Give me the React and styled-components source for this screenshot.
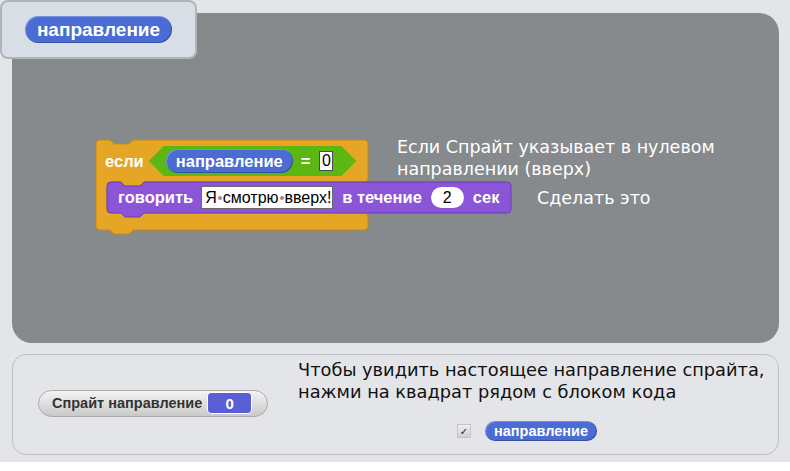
import React from "react";
import styled, { createGlobalStyle } from "styled-components";

const Global = createGlobalStyle`
  html, body { margin: 0; padding: 0; background: #ffffff; }
  #root { width: 790px; height: 471px; }
`;

const ORANGE = "#e6a625";
const ORANGE_DARK = "#c88a12";
const PURPLE = "#8a55d7";
const PURPLE_DARK = "#6b3cb8";
const BLUE = "#4a6cd4";
const GREEN = "#5cb712";

const Page = styled.div`
  position: relative;
  width: 790px;
  height: 462px;
  box-sizing: border-box;
  background: #e4e5e9;
  padding: 13px 11px 7px 12px;
  display: flex;
  flex-direction: column;
  gap: 11px;
`;

const Canvas = styled.div`
  position: relative;
  height: 330px;
  background: #868a8c;
  border-radius: 20px;
`;

const LabelBox = styled.div`
  position: absolute;
  left: 0;
  top: 0;
  width: 197px;
  height: 59px;
  box-sizing: border-box;
  background: #d8dee6;
  border: 2px solid #b1b5ba;
  border-radius: 8px;
  display: flex;
  align-items: flex-start;
  padding: 14px 0 0 23px;
`;

const Reporter = styled.div`
  display: inline-flex;
  align-items: center;
  justify-content: center;
  box-sizing: border-box;
  height: ${(p) => p.$h}px;
  width: ${(p) => p.$w}px;
  flex-shrink: 0;
  background: ${BLUE};
  border-radius: ${(p) => p.$h / 2}px;
  box-shadow: inset -1px -1px 0 rgba(0, 0, 0, 0.25), inset 1px 1px 0 rgba(255, 255, 255, 0.25);
  color: #fff;
  font-family: "Liberation Sans", Arial, sans-serif;
  font-weight: 700;
  font-size: ${(p) => p.$fs}px;
  white-space: nowrap;
`;

const Script = styled.div`
  position: absolute;
  left: 84px;
  top: 127px;
  display: flex;
  flex-direction: column;
`;

const CBlock = styled.div`
  position: relative;
  width: 272px;
  height: 95px;
  display: flex;
  flex-direction: column;
`;

const Shape = styled.svg`
  position: absolute;
  left: 0;
  top: 0;
  overflow: visible;
`;

const Header = styled.div`
  position: relative;
  height: 42px;
  display: flex;
  align-items: center;
  padding-left: 9px;
  gap: 5px;
`;

const BlockText = styled.span`
  color: #fff;
  font-family: "Liberation Sans", Arial, sans-serif;
  font-weight: 700;
  font-size: 16.5px;
  white-space: nowrap;
`;

const Hexagon = styled.div`
  display: flex;
  align-items: center;
  height: 30px;
  padding: 0 23px 0 17px;
  background: ${GREEN};
  clip-path: polygon(15px 0, calc(100% - 15px) 0, 100% 50%, calc(100% - 15px) 100%, 15px 100%, 0 50%);
  gap: 8px;
`;

const NumBox = styled.div`
  box-sizing: border-box;
  width: 14px;
  height: 20px;
  background: #fff;
  border: 1px solid #4d4d4d;
  display: flex;
  align-items: center;
  justify-content: center;
  font-family: "Liberation Sans", Arial, sans-serif;
  font-size: 16px;
  color: #000;
  margin-left: 1px;
`;

const SayBlock = styled.div`
  position: relative;
  margin-left: 11px;
  width: 404px;
  height: 31px;
`;

const SayRow = styled.div`
  position: relative;
  height: 31px;
  display: flex;
  align-items: center;
  padding-left: 11px;
  gap: 9px;
`;

const TextInput = styled.div`
  box-sizing: border-box;
  width: 132px;
  height: 23px;
  flex-shrink: 0;
  background: #fff;
  border: 1px solid #6b6b6b;
  display: flex;
  align-items: center;
  padding-left: 3px;
  font-family: "Liberation Sans", Arial, sans-serif;
  font-size: 16px;
  color: #000;
  white-space: nowrap;
  overflow: hidden;
  margin-left: -1px;
`;

const Dot = styled.span`
  display: inline-block;
  width: 4px;
  height: 4px;
  border-radius: 2px;
  background: #b5807e;
  margin: 0 1px;
`;

const NumPill = styled.div`
  width: 33px;
  height: 21px;
  flex-shrink: 0;
  border-radius: 11px;
  background: #fff;
  display: flex;
  align-items: center;
  justify-content: center;
  font-family: "Liberation Sans", Arial, sans-serif;
  font-size: 16px;
  color: #000;
`;

const Comment = styled.div`
  position: absolute;
  left: ${(p) => p.$x}px;
  top: ${(p) => p.$y}px;
  color: #fff;
  font-family: "DejaVu Sans", sans-serif;
  font-size: 17.5px;
  line-height: 22px;
  white-space: pre;
`;

const Panel = styled.div`
  flex: 1;
  box-sizing: border-box;
  border: 1px solid #bfc0c3;
  border-radius: 14px;
  display: flex;
  align-items: center;
  padding-left: 25px;
`;

const Monitor = styled.div`
  box-sizing: border-box;
  width: 230px;
  height: 27px;
  flex-shrink: 0;
  border: 1px solid #a9a9a9;
  border-radius: 14px;
  background: linear-gradient(#f4f4f4, #c9c9c9);
  display: flex;
  align-items: center;
  padding-left: 13px;
  gap: 5px;
  margin-top: -3px;
`;

const MonitorLabel = styled.span`
  font-family: "Liberation Sans", Arial, sans-serif;
  font-weight: 700;
  font-size: 14.5px;
  color: #333;
  white-space: nowrap;
`;

const MonitorValue = styled.div`
  width: 45px;
  height: 22px;
  flex-shrink: 0;
  box-sizing: border-box;
  border: 1px solid #fff;
  border-radius: 4px;
  background: #5b5fd6;
  color: #fff;
  font-family: "Liberation Sans", Arial, sans-serif;
  font-weight: 700;
  font-size: 15px;
  display: flex;
  align-items: center;
  justify-content: center;
`;

const Help = styled.div`
  align-self: stretch;
  margin-left: 30px;
  display: flex;
  flex-direction: column;
  padding-top: 4px;
`;

const HelpText = styled.div`
  font-family: "DejaVu Sans", sans-serif;
  font-size: 17.8px;
  line-height: 22px;
  color: #111;
  white-space: pre;
`;

const CheckRow = styled.div`
  display: flex;
  align-items: center;
  gap: 14px;
  margin-top: 18px;
  padding-left: 159px;
`;

const CheckBox = styled.div`
  width: 14px;
  height: 14px;
  box-sizing: border-box;
  background: linear-gradient(#f0f0f0, #d0d0d0);
  border: 1px solid #c4c4c4;
  display: flex;
  align-items: center;
  justify-content: center;
  font-family: "DejaVu Sans", sans-serif;
  font-size: 10px;
  color: #222;
`;

const cPath =
  "M0,4 Q0,0 4,0 L14,0 L18,4 L33,4 L37,0 L268,0 Q272,0 272,4 L272,38 Q272,42 268,42 " +
  "L48,42 L44,46 L29,46 L25,42 L15,42 Q11,42 11,46 L11,69 Q11,73 15,73 L268,73 Q272,73 272,77 " +
  "L272,86 Q272,90 268,90 L37,90 L33,94 L18,94 L14,90 L4,90 Q0,90 0,86 Z";

const sayPath =
  "M0,4 Q0,0 4,0 L14,0 L18,4 L33,4 L37,0 L400,0 Q404,0 404,4 L404,27 Q404,31 400,31 " +
  "L37,31 L33,35 L18,35 L14,31 L4,31 Q0,31 0,27 Z";

export default function App() {
  return (
    <>
      <Global />
      <Page>
        <Canvas>
          <Script>
            <CBlock>
              <Shape width="272" height="95" viewBox="0 0 272 95">
                <path d={cPath} fill={ORANGE} stroke={ORANGE_DARK} strokeWidth="1" />
              </Shape>
              <Header>
                <BlockText>если</BlockText>
                <Hexagon>
                  <Reporter $w={127} $h={24} $fs={16.5}>направление</Reporter>
                  <BlockText>=</BlockText>
                  <NumBox>0</NumBox>
                </Hexagon>
              </Header>
              <SayBlock>
                <Shape width="404" height="35" viewBox="0 0 404 35">
                  <path d={sayPath} fill={PURPLE} stroke={PURPLE_DARK} strokeWidth="1" />
                </Shape>
                <SayRow>
                  <BlockText>говорить</BlockText>
                  <TextInput>
                    Я<Dot />смотрю<Dot />вверх!
                  </TextInput>
                  <BlockText>в течение</BlockText>
                  <NumPill>2</NumPill>
                  <BlockText>сек</BlockText>
                </SayRow>
              </SayBlock>
            </CBlock>
          </Script>
          <Comment $x={385} $y={123}>{"Если Спрайт указывает в нулевом\nнаправлении (вверх)"}</Comment>
          <Comment $x={525} $y={174}>Сделать это</Comment>
        </Canvas>
        <LabelBox>
          <Reporter $w={147} $h={27} $fs={19}>направление</Reporter>
        </LabelBox>
        <Panel>
          <Monitor>
            <MonitorLabel>Спрайт направление</MonitorLabel>
            <MonitorValue>0</MonitorValue>
          </Monitor>
          <Help>
            <HelpText>{"Чтобы увидить настоящее направление спрайта,\nнажми на квадрат рядом с блоком кода"}</HelpText>
            <CheckRow>
              <CheckBox>✓</CheckBox>
              <Reporter $w={112} $h={20} $fs={14.5}>направление</Reporter>
            </CheckRow>
          </Help>
        </Panel>
      </Page>
    </>
  );
}
